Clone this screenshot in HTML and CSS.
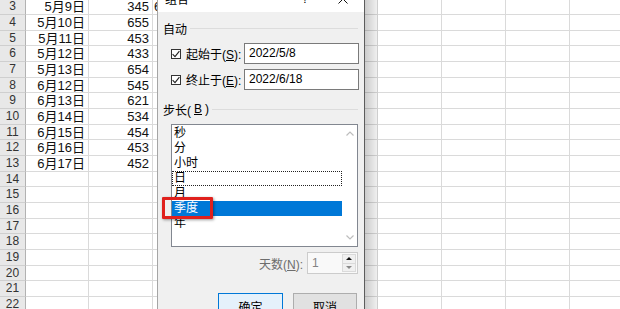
FILE: index.html
```html
<!DOCTYPE html>
<html lang="zh-CN">
<head>
  <meta charset="UTF-8" />
  <title>组合</title>
  <link rel="stylesheet" href="styles.css">
</head>
<body>
  <div class="sheet" id="sheet"></div>

  <!-- 组合对话框 -->
  <div class="dialog">
    <div class="titlebar">
      <span class="title">组合</span>
      <span class="help">?</span>
      <span class="close">
        <svg width="10" height="10" viewBox="0 0 10 10"><path d="M0.5 0.5L9.5 9.5M9.5 0.5L0.5 9.5" stroke="#111" stroke-width="1"/></svg>
      </span>
    </div>
    <div class="client">
      <div class="legend">自动</div>
      <div class="check-row">
        <span class="box"><svg width="8" height="8" viewBox="0 0 8 8"><path d="M0.6 4.2L3 6.6L7.4 1.2" fill="none" stroke="#222" stroke-width="1.1"/></svg></span>
        <label>起始于(<u>S</u>):</label>
        <div class="field">2022/5/8</div>
      </div>
      <div class="check-row">
        <span class="box"><svg width="8" height="8" viewBox="0 0 8 8"><path d="M0.6 4.2L3 6.6L7.4 1.2" fill="none" stroke="#222" stroke-width="1.1"/></svg></span>
        <label>终止于(<u>E</u>):</label>
        <div class="field">2022/6/18</div>
      </div>
      <div class="legend step">步长(<u>B</u>)</div>
      <div class="listbox">
        <div class="items">
          <div class="item">秒</div>
          <div class="item">分</div>
          <div class="item">小时</div>
          <div class="item focus">日</div>
          <div class="item">月</div>
          <div class="item sel">季度</div>
          <div class="item">年</div>
        </div>
        <div class="scroll">
          <svg width="8" height="5" viewBox="0 0 8 5"><path d="M0.5 4.5L4 1L7.5 4.5" fill="none" stroke="#bdbdbd" stroke-width="1.2"/></svg>
          <svg width="8" height="5" viewBox="0 0 8 5"><path d="M0.5 0.5L4 4L7.5 0.5" fill="none" stroke="#bdbdbd" stroke-width="1.2"/></svg>
        </div>
      </div>
      <div class="spin-row">
        <span class="disabled">天数(<u>N</u>):</span>
        <div class="spin">
          <span class="spin-val">1</span>
          <span class="spin-btns">
            <span class="up"></span>
            <span class="down"></span>
          </span>
        </div>
      </div>
      <div class="buttons">
        <button class="btn default">确定</button>
        <button class="btn">取消</button>
      </div>
    </div>
  </div>

  <div class="mark"></div>

  <script>
    const data = [
      ["5月9日", "345", "6"],
      ["5月10日", "655"],
      ["5月11日", "453"],
      ["5月12日", "433"],
      ["5月13日", "654"],
      ["6月12日", "545"],
      ["6月13日", "621"],
      ["6月14日", "534"],
      ["6月15日", "454"],
      ["6月16日", "453"],
      ["6月17日", "452"]
    ];

    const sheet = document.getElementById("sheet");
    let html = "";
    for (let r = 3; r <= 22; r++) {
      const row = data[r - 3] || [];
      html += `<div class="row"><div class="hd">${r}</div>`;
      for (let c = 0; c < 10; c++) {
        html += `<div class="cell col${c}">${row[c] || ""}</div>`;
      }
      html += `</div>`;
    }
    sheet.innerHTML = html;
  </script>
</body>
</html>
```

FILE: styles.css
```css
* {
  box-sizing: border-box;
}

body {
  margin: 0;
  width: 620px;
  height: 309px;
  overflow: hidden;
  position: relative;
  background: #fff;
  font-family: "Liberation Sans", "Noto Sans CJK SC", sans-serif;
}

/* Arkusz w tle */
.sheet {
  margin-top: -0.67px;
}

.row {
  display: flex;
  height: 15.667px;
}

.hd {
  flex: none;
  width: 26px;
  background: #e8e8e8;
  border-right: 1px solid #b2b2b2;
  border-bottom: 1px solid #cfcfcf;
  color: #333;
  font-size: 12px;
  line-height: 15px;
  text-align: center;
}

.cell {
  flex: none;
  width: 64px;
  border-right: 1px solid #dadada;
  border-bottom: 1px solid #dadada;
  font-size: 13px;
  line-height: 15px;
  text-align: right;
  padding-right: 3px;
  white-space: nowrap;
  color: #111;
}

.cell.col0 {
  width: 63px;
}

.cell.col2 {
  text-align: left;
  padding-left: 1px;
}

.cell.col5 {
  width: 33px;
}

/* Okno dialogowe */
.dialog {
  position: absolute;
  left: 157px;
  top: -16px;
  width: 208px;
  height: 345px;
  background: #f0f0f0;
  border: 1px solid #a5a5a5;
  border-right-color: #5c5c5c;
  font-family: "Liberation Sans", "Noto Sans CJK SC", sans-serif;
  font-size: 12px;
  color: #000;
}

.dialog::after {
  content: "";
  position: absolute;
  left: 100%;
  top: 0;
  bottom: 0;
  width: 13px;
  margin-left: 1px;
  background: linear-gradient(to right, rgba(0, 0, 0, 0.2), rgba(0, 0, 0, 0.05));
}

.titlebar {
  height: 27px;
  background: #fff;
  display: flex;
  align-items: center;
  padding-left: 7px;
}

.title {
  flex: 1;
}

.help {
  width: 34px;
  text-align: center;
}

.close {
  width: 42px;
  display: flex;
  justify-content: center;
}

.client {
  padding: 8px 6px 0 5px;
}

.legend {
  display: flex;
  align-items: center;
  gap: 3px;
  height: 16px;
}

.legend::after {
  content: "";
  flex: 1;
  border-top: 1px solid #dcdcdc;
}

.legend.step {
  margin-top: 11px;
}

.check-row {
  display: flex;
  align-items: center;
  height: 21px;
  margin-top: 7px;
  padding-left: 8px;
}

.check-row + .check-row {
  margin-top: 5px;
}

.box {
  width: 10px;
  height: 10px;
  border: 1px solid #333;
  background: #fff;
  margin-right: 5px;
  display: flex;
  align-items: center;
  justify-content: center;
}

.check-row label {
  flex: 1;
}

.field {
  width: 115px;
  height: 21px;
  margin-right: -1px;
  border: 1px solid #7a7a7a;
  background: #fff;
  padding-left: 4px;
  line-height: 19px;
}

.listbox {
  display: flex;
  height: 123px;
  margin: 7px 0 0 8px;
  border: 1px solid #828790;
  background: #fff;
}

.items {
  flex: 1;
  padding-top: 1px;
}

.item {
  height: 15px;
  line-height: 15px;
  padding-left: 2px;
}

.item.focus {
  outline: 1px dotted #222;
  outline-offset: -1px;
}

.item.sel {
  background: #0078d7;
  color: #fff;
}

.scroll {
  width: 15px;
  display: flex;
  flex-direction: column;
  justify-content: space-between;
  align-items: center;
  padding: 6px 0;
}

.scroll svg {
  display: block;
}

.spin-row {
  display: flex;
  justify-content: flex-end;
  align-items: center;
  gap: 4px;
  margin-top: 5px;
  height: 22px;
}

.disabled {
  color: #6d6d6d;
}

.spin {
  width: 51px;
  height: 22px;
  display: flex;
  border: 1px solid #cccccc;
  background: #f9f9f9;
}

.spin-val {
  flex: 1;
  padding-left: 4px;
  line-height: 20px;
  color: #838383;
}

.spin-btns {
  width: 14px;
  display: flex;
  flex-direction: column;
  margin: 1px 1px 1px 0;
}

.spin-btns span {
  flex: 1;
  display: flex;
  align-items: center;
  justify-content: center;
  background: #f0f0f0;
  border: 1px solid #dadada;
}

.spin-btns .down {
  border-top: none;
}

.spin-btns .up::before {
  content: "";
  border-left: 3px solid transparent;
  border-right: 3px solid transparent;
  border-bottom: 3px solid #111;
}

.spin-btns .down::before {
  content: "";
  border-left: 3px solid transparent;
  border-right: 3px solid transparent;
  border-top: 3px solid #888;
}

.buttons {
  display: flex;
  justify-content: flex-end;
  gap: 10px;
  margin-top: 19px;
  padding-right: 1px;
}

.btn {
  height: 26px;
  width: 64px;
  padding: 0;
  font: inherit;
  color: #000;
  border: 1px solid #adadad;
  background: #e1e1e1;
}

.btn.default {
  width: 65px;
  border-color: #0078d7;
  background: #e5f1fb;
}

/* Czerwona ramka wyróżnienia */
.mark {
  position: absolute;
  left: 162px;
  top: 197px;
  width: 51px;
  height: 22px;
  border: 3px solid #e0211d;
  border-radius: 1px;
  box-shadow: 1px 1px 3px rgba(0, 0, 0, 0.4);
}
```
